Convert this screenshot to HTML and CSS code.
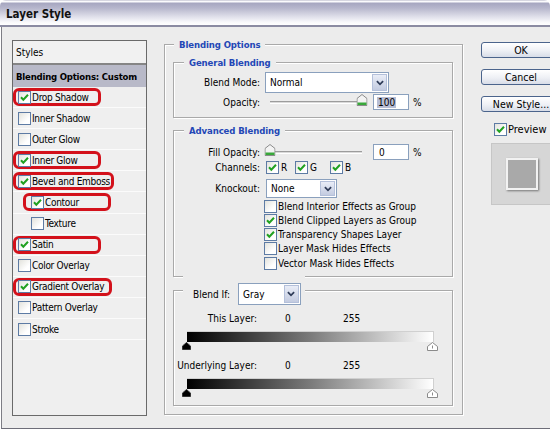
FILE: index.html
```html
<!DOCTYPE html>
<html>
<head>
<meta charset="utf-8">
<title>Layer Style</title>
<link rel="stylesheet" href="styles.css">
</head>
<body>
<div class="window">
  <div class="titlebar"><span class="title">Layer Style</span></div>
  <div class="client">
    <div class="styles">
      <div class="srow head">Styles</div>
      <div class="srow sel">Blending Options: Custom</div>
      <div class="srow"><span class="item hl w88"><span class="cb"><svg viewBox="0 0 11 11"><path d="M2 5.3 L4.3 7.7 L9 2.8"/></svg></span>Drop Shadow</span></div>
      <div class="srow"><span class="item"><span class="cb"></span>Inner Shadow</span></div>
      <div class="srow"><span class="item"><span class="cb"></span>Outer Glow</span></div>
      <div class="srow"><span class="item hl w88"><span class="cb"><svg viewBox="0 0 11 11"><path d="M2 5.3 L4.3 7.7 L9 2.8"/></svg></span>Inner Glow</span></div>
      <div class="srow"><span class="item hl w101"><span class="cb"><svg viewBox="0 0 11 11"><path d="M2 5.3 L4.3 7.7 L9 2.8"/></svg></span>Bevel and Emboss</span></div>
      <div class="srow"><span class="item sub hl w88"><span class="cb"><svg viewBox="0 0 11 11"><path d="M2 5.3 L4.3 7.7 L9 2.8"/></svg></span>Contour</span></div>
      <div class="srow"><span class="item sub"><span class="cb"></span>Texture</span></div>
      <div class="srow"><span class="item hl w88"><span class="cb"><svg viewBox="0 0 11 11"><path d="M2 5.3 L4.3 7.7 L9 2.8"/></svg></span>Satin</span></div>
      <div class="srow"><span class="item"><span class="cb"></span>Color Overlay</span></div>
      <div class="srow"><span class="item hl w99"><span class="cb"><svg viewBox="0 0 11 11"><path d="M2 5.3 L4.3 7.7 L9 2.8"/></svg></span>Gradient Overlay</span></div>
      <div class="srow"><span class="item"><span class="cb"></span>Pattern Overlay</span></div>
      <div class="srow"><span class="item"><span class="cb"></span>Stroke</span></div>
    </div>

    <fieldset class="grp outer">
      <legend>Blending Options</legend>

      <fieldset class="grp general">
        <legend>General Blending</legend>
        <div class="frow r-mode">
          <span class="lbl">Blend Mode:</span>
          <div class="select sel-mode"><span class="val">Normal</span><span class="arrow"><svg viewBox="0 0 9 6"><path d="M1 1 L4.5 4.5 L8 1"/></svg></span></div>
        </div>
        <div class="frow r-opacity">
          <span class="lbl">Opacity:</span>
          <div class="slider"><span class="track"><span class="thumb" style="left:100%"><svg viewBox="0 0 11 12"><path class="tb" d="M5.5 0.5 L10.5 4.5 V11.5 H0.5 V4.5 Z"/><path class="tg" d="M1 8.5 H10 V11 H1 Z"/></svg></span></span></div>
          <span class="num"><span class="hilite">100</span></span><span class="pct">%</span>
        </div>
      </fieldset>

      <fieldset class="grp advanced">
        <legend>Advanced Blending</legend>
        <div class="frow r-fill">
          <span class="lbl">Fill Opacity:</span>
          <div class="slider"><span class="track"><span class="thumb" style="left:0%"><svg viewBox="0 0 11 12"><path class="tb" d="M5.5 0.5 L10.5 4.5 V11.5 H0.5 V4.5 Z"/><path class="tg" d="M1 8.5 H10 V11 H1 Z"/></svg></span></span></div>
          <span class="num zero">0</span><span class="pct">%</span>
        </div>
        <div class="frow r-chan">
          <span class="lbl">Channels:</span>
          <span class="chan ch-r"><span class="cb"><svg viewBox="0 0 11 11"><path d="M2 5.3 L4.3 7.7 L9 2.8"/></svg></span>R</span>
          <span class="chan ch-g"><span class="cb"><svg viewBox="0 0 11 11"><path d="M2 5.3 L4.3 7.7 L9 2.8"/></svg></span>G</span>
          <span class="chan ch-b"><span class="cb"><svg viewBox="0 0 11 11"><path d="M2 5.3 L4.3 7.7 L9 2.8"/></svg></span>B</span>
        </div>
        <div class="frow r-knock">
          <span class="lbl">Knockout:</span>
          <div class="select sel-knock"><span class="val">None</span><span class="arrow"><svg viewBox="0 0 9 6"><path d="M1 1 L4.5 4.5 L8 1"/></svg></span></div>
        </div>
        <div class="checks">
          <div class="ck"><span class="cb"></span>Blend Interior Effects as Group</div>
          <div class="ck"><span class="cb"><svg viewBox="0 0 11 11"><path d="M2 5.3 L4.3 7.7 L9 2.8"/></svg></span>Blend Clipped Layers as Group</div>
          <div class="ck"><span class="cb"><svg viewBox="0 0 11 11"><path d="M2 5.3 L4.3 7.7 L9 2.8"/></svg></span>Transparency Shapes Layer</div>
          <div class="ck"><span class="cb"></span>Layer Mask Hides Effects</div>
          <div class="ck"><span class="cb"></span>Vector Mask Hides Effects</div>
        </div>
      </fieldset>

      <fieldset class="grp blendif">
        <legend class="bi-legend"><span class="bi-text">Blend If:</span><span class="select sel-gray"><span class="val">Gray</span><span class="arrow"><svg viewBox="0 0 9 6"><path d="M1 1 L4.5 4.5 L8 1"/></svg></span></span></legend>
        <div class="brow first"><span class="blbl">This Layer:</span><span class="v0">0</span><span class="v255">255</span></div>
        <div class="bar"></div>
        <div class="handles">
          <svg class="h-black" viewBox="0 0 9 8"><path d="M4.5 0.5 L8.5 4 V7.5 H0.5 V4 Z"/></svg>
          <svg class="h-white" viewBox="0 0 11 9"><path d="M5.5 0.5 L10.5 4.5 V8.5 H0.5 V4.5 Z"/><path class="mark" d="M5.5 3.5 V6.5"/></svg>
        </div>
        <div class="brow"><span class="blbl">Underlying Layer:</span><span class="v0">0</span><span class="v255">255</span></div>
        <div class="bar"></div>
        <div class="handles">
          <svg class="h-black" viewBox="0 0 9 8"><path d="M4.5 0.5 L8.5 4 V7.5 H0.5 V4 Z"/></svg>
          <svg class="h-white" viewBox="0 0 11 9"><path d="M5.5 0.5 L10.5 4.5 V8.5 H0.5 V4.5 Z"/><path class="mark" d="M5.5 3.5 V6.5"/></svg>
        </div>
      </fieldset>
    </fieldset>

    <div class="side">
      <div class="btn">OK</div>
      <div class="btn">Cancel</div>
      <div class="btn">New Style...</div>
      <div class="prev-row"><span class="cb"><svg viewBox="0 0 11 11"><path d="M2 5.3 L4.3 7.7 L9 2.8"/></svg></span>Preview</div>
      <div class="prev-box"><div class="prev-square"></div></div>
    </div>
  </div>
</div>
</body>
</html>
```

FILE: styles.css
```css
* { box-sizing: border-box; }

html, body {
  margin: 0;
  padding: 0;
  background: #ffffff;
  overflow: hidden;
}

body {
  width: 550px;
  height: 430px;
  font-family: "DejaVu Sans Condensed", "DejaVu Sans", sans-serif;
  font-stretch: condensed;
  font-size: 10px;
  color: #000;
}

.window {
  width: 550px;
  height: 430px;
  border-radius: 6px 6px 0 0;
  overflow: hidden;
}

/* title bar */
.titlebar {
  height: 27px;
  border-bottom: 2px solid #8b8ba2;
  background: linear-gradient(to bottom,
    #d6d6e0 0px, #d6d6e0 1px,
    #fbfbfd 1px, #fbfbfd 2px,
    #a6a6c0 3px, #b6b6cc 8px,
    #dcdce8 16px, #f8f8fb 22px, #ffffff 25px);
  display: flex;
  align-items: center;
  padding: 3px 0 0 6px;
}

.title {
  font-weight: bold;
  font-size: 11.5px;
  color: #111;
}

/* client area */
.client {
  margin-left: 1px;
  height: 402px;
  border-left: 1px solid #7d7d85;
  border-bottom: 1px solid #6d6d78;
  background: #ececec;
  display: flex;
  align-items: flex-start;
}

/* styles list */
.styles {
  flex-shrink: 0;
  margin: 13px 0 0 10px;
  width: 135px;
  height: 376px;
  border: 1px solid #6a6a6a;
  background: #efefef;
}

.srow {
  height: 21.1px;
  border-bottom: 1px solid #fbfbfb;
  display: flex;
  align-items: flex-start;
  padding-top: 1px;
}

.srow.head {
  height: 24px;
  border-bottom: 2px solid #858585;
  padding: 0 0 0 3px;
  align-items: center;
  background: #f1f1f1;
}

.srow.sel {
  height: 22px;
  border-bottom: none;
  padding: 0 0 0 3px;
  align-items: center;
  background: #b8b9c8;
  font-weight: bold;
  font-size: 9.5px;
  letter-spacing: -0.2px;
  white-space: nowrap;
}

.item {
  display: flex;
  align-items: center;
  height: 18px;
  border: 3px solid transparent;
  border-radius: 6px;
  padding-left: 2px;
  white-space: nowrap;
  letter-spacing: -0.3px;
}

.item .cb { margin-right: 1px; }

.item.sub {
  margin-left: 10px;
  padding-left: 5px;
}

.item.hl { border-color: #d3111b; }
.w88 { width: 88px; }
.w99 { width: 99px; }
.w101 { width: 101px; }

/* checkbox */
.cb {
  flex-shrink: 0;
  width: 13px;
  height: 13px;
  border: 1px solid #5d7ba4;
  background: linear-gradient(135deg, #e2e2dc 0%, #ffffff 70%);
  display: inline-flex;
  margin-right: 2px;
}

.cb svg {
  width: 11px;
  height: 11px;
}

.cb svg path {
  fill: none;
  stroke: #21a121;
  stroke-width: 2;
}

/* fieldsets */
.grp {
  margin: 0;
  min-width: 0;
  padding: 0;
  border: 1px solid #a9a9a9;
  box-shadow: inset 1px 1px 0 #ffffff, 1px 1px 0 #ffffff;
}

.grp > legend {
  padding: 0 5px;
  margin-left: 10px;
  height: 13px;
  line-height: 13px;
  font-weight: bold;
  font-size: 9.5px;
  letter-spacing: -0.1px;
  color: #2347b6;
  background: #ececec;
}

.outer {
  flex-shrink: 0;
  margin: 11px 0 0 17px;
  width: 299px;
  height: 377px;
  padding: 5px 9px 8px 8px;
}

.outer > legend { margin-left: 1px; }

.general {
  height: 62px;
  padding-top: 3px;
}

.advanced {
  margin-top: 6px;
  height: 153px;
  padding-top: 7px;
}

.blendif {
  margin-top: -2px;
  height: 131px;
}

/* form rows */
.frow {
  display: flex;
  align-items: center;
}

.lbl {
  width: 86px;
  margin-right: 5px;
  text-align: right;
  white-space: nowrap;
}

.r-mode { height: 21px; }
.r-opacity { height: 16px; margin-top: 1px; }
.r-fill { height: 16px; }
.r-chan { height: 13px; margin-top: 1px; }
.r-knock { height: 19px; margin-top: 5px; }

/* select */
.select {
  display: flex;
  align-items: stretch;
  background: #ffffff;
  border: 1px solid #8aa0bd;
}

.select .val {
  flex: 1;
  display: flex;
  align-items: center;
  padding-left: 4px;
}

.select .arrow {
  width: 15px;
  margin: 1px;
  border: 1px solid #b4c0da;
  background: linear-gradient(#e9edf7, #c3cbe0);
  display: flex;
  align-items: center;
  justify-content: center;
}

.select .arrow svg {
  width: 8px;
  height: 6px;
}

.select .arrow path {
  fill: none;
  stroke: #2f3c58;
  stroke-width: 2;
}

.sel-mode { width: 124px; height: 21px; }
.sel-knock { width: 71px; height: 19px; margin-left: 1px; }
.sel-gray { width: 63px; height: 22px; margin-left: 8px; font-weight: normal; color: #000; }

/* slider */
.slider {
  width: 106px;
  height: 16px;
  display: flex;
  align-items: center;
  padding: 0 9px 0 5px;
}

.track {
  position: relative;
  flex: 1;
  height: 3px;
  border-top: 1px solid #9c9c9c;
  border-bottom: 1px solid #ffffff;
  background: #dadada;
}

.thumb {
  position: absolute;
  top: -8px;
  width: 11px;
  height: 12px;
  transform: translateX(-50%);
}

.thumb svg {
  display: block;
  width: 11px;
  height: 12px;
}

.thumb .tb { fill: #f3f3f3; stroke: #8b8b8b; }
.thumb .tg { fill: #38a83a; }

/* number box */
.num {
  width: 36px;
  height: 16px;
  margin-left: 2px;
  border: 1px solid #8aa0bd;
  background: #ffffff;
  display: flex;
  align-items: center;
  padding-left: 3px;
}

.num.zero { padding-left: 5px; }

.hilite {
  background: #b7bdd4;
  padding: 0 1px;
}

.pct { margin-left: 4px; }

/* channels */
.chan {
  display: inline-flex;
  align-items: center;
}

.ch-r { width: 29px; margin-left: 1px; }
.ch-g { width: 35px; }
.ch-b { width: 20px; }

/* checkbox list */
.checks {
  margin: 1px 0 0 90px;
}

.ck {
  height: 14.25px;
  display: flex;
  align-items: center;
  white-space: nowrap;
}

.ck .cb { margin-right: 1px; }

/* blend if */
.grp > legend.bi-legend {
  display: flex;
  align-items: center;
  height: auto;
  margin-left: 9px;
  padding: 8px 4px 0 10px;
  font-weight: normal;
  font-size: 10px;
  letter-spacing: 0;
  color: #000;
}

.brow {
  display: flex;
  height: 14px;
  align-items: center;
  margin-top: 7px;
  white-space: nowrap;
}

.brow.first { margin-top: 6px; }

.blbl {
  width: 83px;
  text-align: right;
}

.v0 {
  margin-left: 28px;
  width: 58px;
}

.bar {
  margin: 6px 0 0 13px;
  width: 247px;
  height: 11px;
  background: linear-gradient(to right, #000000 0%, #7a7a7a 50%, #ffffff 100%);
  border-top: 1px solid #d0d0d0;
  border-right: 1px solid #d0d0d0;
}

.handles {
  margin-left: 9px;
  width: 255px;
  height: 9px;
  display: flex;
  justify-content: space-between;
  align-items: flex-start;
}

.h-black {
  width: 9px;
  height: 8px;
  margin-left: -1px;
}

.h-black path { fill: #000; stroke: #333; }

.h-white {
  width: 11px;
  height: 9px;
}

.h-white path { fill: #ffffff; stroke: #8a8a8a; }
.h-white .mark { fill: none; stroke: #8a8a8a; }

/* right side */
.side {
  flex-shrink: 0;
  margin: 15px 0 0 18px;
  width: 80px;
  display: flex;
  flex-direction: column;
}

.btn {
  height: 16px;
  margin-bottom: 11px;
  border: 1px solid #4b648c;
  border-radius: 3px;
  background: linear-gradient(#ffffff, #eef0f5 55%, #d8dde8);
  display: flex;
  align-items: center;
  justify-content: center;
  font-size: 10.5px;
  white-space: nowrap;
}

.prev-row {
  height: 13px;
  margin-left: 13px;
  display: flex;
  align-items: center;
  font-size: 11px;
  white-space: nowrap;
}

.prev-row .cb { margin-right: 1px; }

.prev-box {
  margin: 7px 0 0 10px;
  width: 62px;
  height: 62px;
  border: 1px solid #c6c6c6;
  background: #d6d6d6;
  padding: 14px;
}

.prev-square {
  width: 32px;
  height: 32px;
  border: 2px solid #f2f2f2;
  background: #a9a9a9;
  box-shadow: 1px 1px 2px rgba(0, 0, 0, 0.45);
}
```
